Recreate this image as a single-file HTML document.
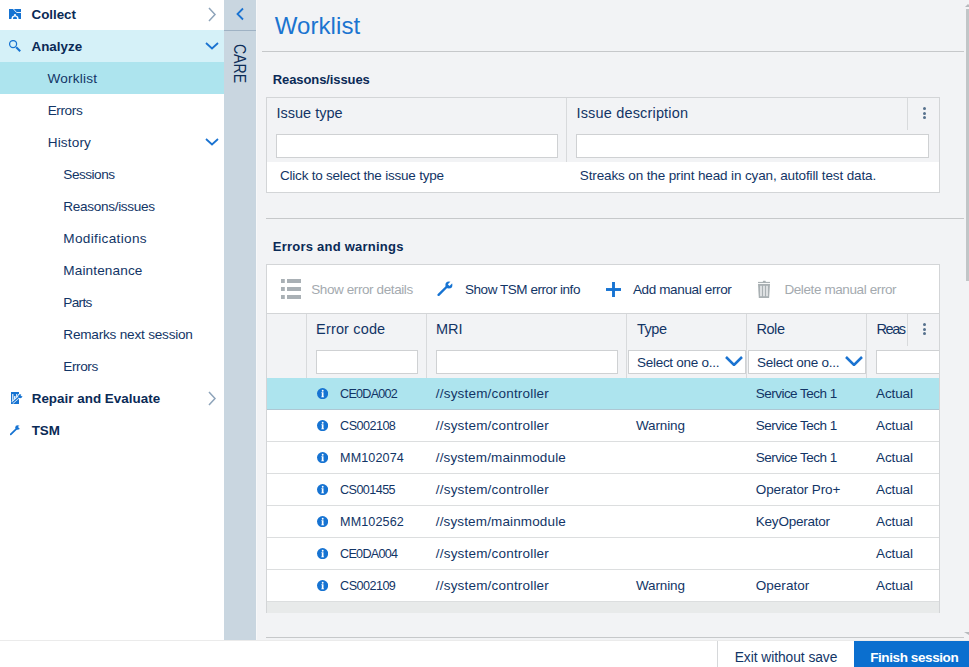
<!DOCTYPE html><html><head><meta charset="utf-8"><style>
html,body{margin:0;padding:0;width:969px;height:667px;overflow:hidden;background:#fff}
body{position:relative;font-family:"Liberation Sans",sans-serif}
.t{position:absolute;white-space:nowrap;line-height:normal}
.b{position:absolute;display:block}
</style></head><body>
<div class="b" style="left:0px;top:0px;width:969px;height:667px;background:#ffffff"></div>
<div class="b" style="left:256px;top:0px;width:713px;height:640px;background:#f2f3f5"></div>
<div class="b" style="left:256px;top:0px;width:1px;height:640px;background:#f7f8f9"></div>
<div class="b" style="left:0px;top:30px;width:224px;height:32px;background:#d5f1f8"></div>
<div class="b" style="left:0px;top:62px;width:224px;height:32px;background:#ade4ee"></div>
<div class="b" style="left:224px;top:0px;width:32px;height:640px;background:#c9d6e0"></div>
<div class="b" style="left:224px;top:30px;width:32px;height:1px;background:#9fb2c4"></div>
<div class="t" style="left:31.50px;top:7.00px;font-size:13.4px;font-weight:bold;color:#0a2a56;letter-spacing:-0.029px;">Collect</div>
<div class="t" style="left:31.50px;top:38.50px;font-size:13.4px;font-weight:bold;color:#0a2a56;letter-spacing:0.010px;">Analyze</div>
<div class="t" style="left:47.50px;top:70.80px;font-size:13.6px;color:#123566;letter-spacing:0.200px;">Worklist</div>
<div class="t" style="left:47.70px;top:102.80px;font-size:13.6px;color:#123566;letter-spacing:-0.404px;">Errors</div>
<div class="t" style="left:47.70px;top:134.80px;font-size:13.6px;color:#123566;letter-spacing:0.148px;">History</div>
<div class="t" style="left:63.30px;top:166.80px;font-size:13.6px;color:#123566;letter-spacing:-0.484px;">Sessions</div>
<div class="t" style="left:63.30px;top:198.80px;font-size:13.6px;color:#123566;letter-spacing:-0.323px;">Reasons/issues</div>
<div class="t" style="left:63.30px;top:230.80px;font-size:13.6px;color:#123566;letter-spacing:0.336px;">Modifications</div>
<div class="t" style="left:63.30px;top:262.80px;font-size:13.6px;color:#123566;letter-spacing:0.123px;">Maintenance</div>
<div class="t" style="left:63.30px;top:294.80px;font-size:13.6px;color:#123566;letter-spacing:-0.686px;">Parts</div>
<div class="t" style="left:63.30px;top:326.80px;font-size:13.6px;color:#123566;letter-spacing:-0.215px;">Remarks next session</div>
<div class="t" style="left:63.30px;top:358.80px;font-size:13.6px;color:#123566;letter-spacing:-0.404px;">Errors</div>
<div class="t" style="left:31.70px;top:390.90px;font-size:13.4px;font-weight:bold;color:#0a2a56;letter-spacing:0.023px;">Repair and Evaluate</div>
<div class="t" style="left:31.70px;top:422.60px;font-size:13.4px;font-weight:bold;color:#0a2a56;letter-spacing:0.000px;">TSM</div>
<svg class="b" style="left:207px;top:6.5px" width="10" height="15" viewBox="0 0 10 15"><path d="M2 0.9 L8 7.5 L2 14.1" fill="none" stroke="#8ea4ba" stroke-width="1.5"/></svg>
<svg class="b" style="left:205px;top:41.5px" width="14" height="8" viewBox="0 0 14 8"><path d="M1 1 L7.0 6.5 L13 1" fill="none" stroke="#1a73d1" stroke-width="1.8"/></svg>
<svg class="b" style="left:205px;top:137.5px" width="14" height="8" viewBox="0 0 14 8"><path d="M1 1 L7.0 6.5 L13 1" fill="none" stroke="#1a73d1" stroke-width="1.8"/></svg>
<svg class="b" style="left:207px;top:391px" width="10" height="15" viewBox="0 0 10 15"><path d="M2 0.9 L8 7.5 L2 14.1" fill="none" stroke="#8ea4ba" stroke-width="1.5"/></svg>
<svg class="b" style="left:235px;top:7px" width="10" height="14" viewBox="0 0 10 14"><path d="M8 1.5 L2.5 7 L8 12.5" fill="none" stroke="#1a73d1" stroke-width="1.8"/></svg>
<div class="t" style="left:219px;top:51.5px;width:40px;height:17px;font-size:17px;line-height:17px;color:#0c2d57;text-align:center;transform:rotate(90deg) scaleX(0.83);transform-origin:center;letter-spacing:0px">CARE</div>
<svg class="b" style="left:9px;top:9px" width="12" height="10" viewBox="0 0 12 10">
<rect x="0" y="0" width="12" height="10" fill="#1673d2"/>
<path d="M4 -0.5 L7.6 3.5 H12.5" stroke="#fff" stroke-width="0.9" fill="none"/>
<path d="M2.4 10.2 A3.6 3.6 0 0 1 9.6 10.2 Z" fill="#fff"/>
<path d="M3.9 10 A2.1 2.4 0 0 1 8.1 10 Z" fill="#1673d2"/>
<circle cx="6" cy="6.1" r="1.1" fill="#fff"/>
</svg>
<svg class="b" style="left:9px;top:40px" width="12" height="12" viewBox="0 0 12 12">
<circle cx="4.1" cy="4.0" r="3.5" fill="none" stroke="#1673d2" stroke-width="1.25"/>
<path d="M7.2 7.2 L11.2 11.2" stroke="#1673d2" stroke-width="2"/>
</svg>
<svg class="b" style="left:11px;top:392px" width="12" height="12" viewBox="0 0 12 12">
<rect x="0" y="0" width="8" height="12" fill="#1673d2"/>
<path d="M1.8 2 V8.4 H4.8" stroke="#fff" stroke-width="1.1" fill="none"/>
<rect x="3.1" y="4.1" width="1.4" height="2.8" rx="0.5" fill="#fff"/>
<path d="M5.6 2 V5.6" stroke="#fff" stroke-width="0.9"/>
<path d="M1.3 10.8 L7.6 5.2" stroke="#fff" stroke-width="2.6"/>
<circle cx="9.2" cy="4.2" r="2.8" fill="#fff"/>
<path d="M1.3 10.8 L7.6 5.2" stroke="#1673d2" stroke-width="1.3"/>
<circle cx="9.2" cy="4.2" r="2.0" fill="#1673d2"/>
<path d="M9.6 3.4 L10.9 1.6 L12.6 3.2 L11.1 4.6 Z" fill="#fff"/>
</svg>
<svg class="b" style="left:10px;top:425px" width="11" height="11" viewBox="0 0 11 11">
<path d="M0.7 9.3 L6.4 3.8" stroke="#1673d2" stroke-width="1.8" stroke-linecap="round"/>
<circle cx="7.6" cy="2.5" r="2.35" fill="#1673d2"/>
<path d="M8.0 2.0 L9.2 0.6 L11 2.2 L9.6 3.4 Z" fill="#fff"/>
</svg>
<div class="t" style="left:274.70px;top:12.20px;font-size:24px;color:#1b74d0;letter-spacing:0.087px;">Worklist</div>
<div class="b" style="left:262px;top:51px;width:702px;height:1px;background:#c6c8ca"></div>
<div class="t" style="left:272.80px;top:71.50px;font-size:13px;font-weight:bold;color:#0a2a56;letter-spacing:-0.098px;">Reasons/issues</div>
<div class="b" style="left:266px;top:97px;width:674px;height:96px;background:#ffffff;border:1px solid #d3d5d7;box-sizing:border-box"></div>
<div class="b" style="left:267px;top:98px;width:672px;height:64px;background:#f2f3f5"></div>
<div class="b" style="left:566px;top:98px;width:1px;height:64px;background:#d8dadc"></div>
<div class="b" style="left:907px;top:98px;width:1px;height:32px;background:#d8dadc"></div>
<div class="t" style="left:276.50px;top:104.90px;font-size:14.5px;color:#123566;letter-spacing:-0.010px;">Issue type</div>
<div class="t" style="left:576.50px;top:104.90px;font-size:14.5px;color:#123566;letter-spacing:0.168px;">Issue description</div>
<div class="b" style="left:276px;top:134px;width:282px;height:24px;background:#fff;border:1px solid #cfd1d3;box-sizing:border-box"></div>
<div class="b" style="left:576px;top:134px;width:353px;height:24px;background:#fff;border:1px solid #cfd1d3;box-sizing:border-box"></div>
<div class="t" style="left:280.00px;top:168.20px;font-size:13.5px;color:#123566;letter-spacing:-0.218px;">Click to select the issue type</div>
<div class="t" style="left:579.80px;top:168.20px;font-size:13.5px;color:#123566;letter-spacing:-0.128px;">Streaks on the print head in cyan, autofill test data.</div>
<div class="b" style="left:923.4px;top:107.0px;width:3px;height:3px;background:#56718d;border-radius:50%"></div>
<div class="b" style="left:923.4px;top:111.5px;width:3px;height:3px;background:#56718d;border-radius:50%"></div>
<div class="b" style="left:923.4px;top:116.0px;width:3px;height:3px;background:#56718d;border-radius:50%"></div>
<div class="b" style="left:266px;top:218px;width:698px;height:1px;background:#c6c8ca"></div>
<div class="t" style="left:272.80px;top:239.00px;font-size:13px;font-weight:bold;color:#0a2a56;letter-spacing:0.232px;">Errors and warnings</div>
<div class="b" style="left:266px;top:264px;width:674px;height:349px;background:#fff;border:1px solid #d3d5d7;border-bottom:none;box-sizing:border-box"></div>
<div class="b" style="left:267px;top:313px;width:672px;height:1px;background:#d3d5d7"></div>
<div class="b" style="left:267px;top:314px;width:672px;height:64px;background:#f2f3f5"></div>
<svg class="b" style="left:281px;top:279px" width="20" height="20" viewBox="0 0 20 20" fill="#a9b0b5">
<rect x="0" y="0" width="3.8" height="4"/><rect x="6" y="0" width="14" height="4"/>
<rect x="0" y="8" width="3.8" height="4"/><rect x="6" y="8" width="14" height="4"/>
<rect x="0" y="16" width="3.8" height="4"/><rect x="6" y="16" width="14" height="4"/>
</svg>
<div class="t" style="left:311.20px;top:282.00px;font-size:13.5px;color:#a4aaaf;letter-spacing:-0.400px;">Show error details</div>
<svg class="b" style="left:437px;top:281px" width="16" height="16" viewBox="0 0 16 16">
<path d="M1.6 13.8 L9.5 6" stroke="#1673d2" stroke-width="2.4" stroke-linecap="round"/>
<circle cx="11.9" cy="4.0" r="3.5" fill="#1673d2"/>
<path d="M15.8 1.7 L14.1 0 L10.8 3.3 L12.5 5 Z" fill="#fff"/>
</svg>
<div class="t" style="left:465.00px;top:281.60px;font-size:13.5px;color:#123566;letter-spacing:-0.452px;">Show TSM error info</div>
<svg class="b" style="left:605.5px;top:281.5px" width="15" height="15" viewBox="0 0 15 15">
<rect x="6.05" y="0" width="2.9" height="15" fill="#1673d2"/><rect x="0" y="6.05" width="15" height="2.9" fill="#1673d2"/>
</svg>
<div class="t" style="left:632.90px;top:281.60px;font-size:13.5px;color:#123566;letter-spacing:-0.360px;">Add manual error</div>
<svg class="b" style="left:757px;top:280px" width="14" height="18" viewBox="0 0 14 18" fill="#a9b0b3">
<path d="M6.2 0.7 H8.4 L8.9 2 H5.7 Z"/>
<rect x="1" y="1.9" width="12" height="1.2"/>
<path d="M1 4 H13 L12.1 18 H1.8 Z"/>
<rect x="3" y="5.8" width="2" height="10.4" fill="#dde0e2"/><rect x="6" y="5.8" width="2" height="10.4" fill="#dde0e2"/><rect x="9" y="5.8" width="2" height="10.4" fill="#dde0e2"/>
</svg>
<div class="t" style="left:784.40px;top:281.60px;font-size:13.5px;color:#a4aaaf;letter-spacing:-0.394px;">Delete manual error</div>
<div class="b" style="left:306px;top:314px;width:1px;height:64px;background:#d8dadc"></div>
<div class="b" style="left:426px;top:314px;width:1px;height:64px;background:#d8dadc"></div>
<div class="b" style="left:626px;top:314px;width:1px;height:64px;background:#d8dadc"></div>
<div class="b" style="left:746px;top:314px;width:1px;height:64px;background:#d8dadc"></div>
<div class="b" style="left:866px;top:314px;width:1px;height:64px;background:#d8dadc"></div>
<div class="b" style="left:907px;top:314px;width:1px;height:32px;background:#d8dadc"></div>
<div class="t" style="left:316.10px;top:321.00px;font-size:14.5px;color:#123566;letter-spacing:0.155px;">Error code</div>
<div class="t" style="left:436.10px;top:321.00px;font-size:14.5px;color:#123566;letter-spacing:-0.089px;">MRI</div>
<div class="t" style="left:637.00px;top:321.00px;font-size:14.5px;color:#123566;letter-spacing:-0.479px;">Type</div>
<div class="t" style="left:756.40px;top:321.00px;font-size:14.5px;color:#123566;letter-spacing:-0.409px;">Role</div>
<div class="b" style="left:876px;top:318px;width:31px;height:22px;overflow:hidden">
<div class="t" style="left:0.60px;top:3.00px;font-size:14.5px;color:#123566;letter-spacing:-1.448px;">Reas</div>
</div>
<div class="b" style="left:923.4px;top:323.0px;width:3px;height:3px;background:#56718d;border-radius:50%"></div>
<div class="b" style="left:923.4px;top:327.5px;width:3px;height:3px;background:#56718d;border-radius:50%"></div>
<div class="b" style="left:923.4px;top:332.0px;width:3px;height:3px;background:#56718d;border-radius:50%"></div>
<div class="b" style="left:316px;top:350px;width:102px;height:24px;background:#fff;border:1px solid #cfd1d3;box-sizing:border-box"></div>
<div class="b" style="left:436px;top:350px;width:182px;height:24px;background:#fff;border:1px solid #cfd1d3;box-sizing:border-box"></div>
<div class="b" style="left:628px;top:350px;width:118px;height:24px;background:#fff;border:1px solid #cfd1d3;box-sizing:border-box"></div>
<div class="b" style="left:748px;top:350px;width:118px;height:24px;background:#fff;border:1px solid #cfd1d3;box-sizing:border-box"></div>
<div class="b" style="left:876px;top:350px;width:63px;height:24px;background:#fff;border:1px solid #cfd1d3;border-right:none;box-sizing:border-box"></div>
<div class="t" style="left:637.00px;top:355.00px;font-size:13.5px;color:#123566;letter-spacing:-0.279px;">Select one o...</div>
<div class="t" style="left:757.00px;top:355.00px;font-size:13.5px;color:#123566;letter-spacing:-0.279px;">Select one o...</div>
<svg class="b" style="left:724.5px;top:355.8px" width="18" height="10.5" viewBox="0 0 18 10.5"><path d="M1 1 L9.0 9.0 L17 1" fill="none" stroke="#1a73d1" stroke-width="2.5"/></svg>
<svg class="b" style="left:844.5px;top:355.8px" width="18" height="10.5" viewBox="0 0 18 10.5"><path d="M1 1 L9.0 9.0 L17 1" fill="none" stroke="#1a73d1" stroke-width="2.5"/></svg>
<div class="b" style="left:267px;top:378px;width:672px;height:31px;background:#ade4ee"></div>
<div class="b" style="left:267px;top:409px;width:672px;height:1px;background:#aec7d3"></div>
<svg class="b" style="left:316.8px;top:387.7px" width="11.2" height="11.2" viewBox="0 0 11.2 11.2"><circle cx="5.6" cy="5.6" r="5.6" fill="#1673d2"/><path d="M4.4 4.2 H6.5 V8.4 H7 V9.2 H4.3 V8.4 H4.8 V5 H4.4 Z" fill="#fff"/><circle cx="5.7" cy="2.7" r="0.95" fill="#fff"/></svg>
<div class="t" style="left:340.10px;top:386.80px;font-size:12.6px;color:#123566;letter-spacing:-0.748px;">CE0DA002</div>
<div class="t" style="left:435.80px;top:385.80px;font-size:13.5px;color:#123566;letter-spacing:0.193px;">//system/controller</div>
<div class="t" style="left:755.80px;top:385.80px;font-size:13.5px;color:#123566;letter-spacing:-0.531px;">Service Tech 1</div>
<div class="t" style="left:876.00px;top:385.80px;font-size:13.5px;color:#123566;letter-spacing:-0.123px;">Actual</div>
<div class="b" style="left:267px;top:441px;width:672px;height:1px;background:#dcdedf"></div>
<svg class="b" style="left:316.8px;top:419.7px" width="11.2" height="11.2" viewBox="0 0 11.2 11.2"><circle cx="5.6" cy="5.6" r="5.6" fill="#1673d2"/><path d="M4.4 4.2 H6.5 V8.4 H7 V9.2 H4.3 V8.4 H4.8 V5 H4.4 Z" fill="#fff"/><circle cx="5.7" cy="2.7" r="0.95" fill="#fff"/></svg>
<div class="t" style="left:340.10px;top:418.80px;font-size:12.6px;color:#123566;letter-spacing:-0.535px;">CS002108</div>
<div class="t" style="left:435.80px;top:417.80px;font-size:13.5px;color:#123566;letter-spacing:0.193px;">//system/controller</div>
<div class="t" style="left:636.00px;top:417.80px;font-size:13.5px;color:#123566;letter-spacing:-0.129px;">Warning</div>
<div class="t" style="left:755.80px;top:417.80px;font-size:13.5px;color:#123566;letter-spacing:-0.531px;">Service Tech 1</div>
<div class="t" style="left:876.00px;top:417.80px;font-size:13.5px;color:#123566;letter-spacing:-0.123px;">Actual</div>
<div class="b" style="left:267px;top:473px;width:672px;height:1px;background:#dcdedf"></div>
<svg class="b" style="left:316.8px;top:451.7px" width="11.2" height="11.2" viewBox="0 0 11.2 11.2"><circle cx="5.6" cy="5.6" r="5.6" fill="#1673d2"/><path d="M4.4 4.2 H6.5 V8.4 H7 V9.2 H4.3 V8.4 H4.8 V5 H4.4 Z" fill="#fff"/><circle cx="5.7" cy="2.7" r="0.95" fill="#fff"/></svg>
<div class="t" style="left:340.10px;top:450.80px;font-size:12.6px;color:#123566;letter-spacing:0.095px;">MM102074</div>
<div class="t" style="left:435.80px;top:449.80px;font-size:13.5px;color:#123566;letter-spacing:0.136px;">//system/mainmodule</div>
<div class="t" style="left:755.80px;top:449.80px;font-size:13.5px;color:#123566;letter-spacing:-0.531px;">Service Tech 1</div>
<div class="t" style="left:876.00px;top:449.80px;font-size:13.5px;color:#123566;letter-spacing:-0.123px;">Actual</div>
<div class="b" style="left:267px;top:505px;width:672px;height:1px;background:#dcdedf"></div>
<svg class="b" style="left:316.8px;top:483.7px" width="11.2" height="11.2" viewBox="0 0 11.2 11.2"><circle cx="5.6" cy="5.6" r="5.6" fill="#1673d2"/><path d="M4.4 4.2 H6.5 V8.4 H7 V9.2 H4.3 V8.4 H4.8 V5 H4.4 Z" fill="#fff"/><circle cx="5.7" cy="2.7" r="0.95" fill="#fff"/></svg>
<div class="t" style="left:340.10px;top:482.80px;font-size:12.6px;color:#123566;letter-spacing:-0.578px;">CS001455</div>
<div class="t" style="left:435.80px;top:481.80px;font-size:13.5px;color:#123566;letter-spacing:0.193px;">//system/controller</div>
<div class="t" style="left:755.80px;top:481.80px;font-size:13.5px;color:#123566;letter-spacing:-0.110px;">Operator Pro+</div>
<div class="t" style="left:876.00px;top:481.80px;font-size:13.5px;color:#123566;letter-spacing:-0.123px;">Actual</div>
<div class="b" style="left:267px;top:537px;width:672px;height:1px;background:#dcdedf"></div>
<svg class="b" style="left:316.8px;top:515.7px" width="11.2" height="11.2" viewBox="0 0 11.2 11.2"><circle cx="5.6" cy="5.6" r="5.6" fill="#1673d2"/><path d="M4.4 4.2 H6.5 V8.4 H7 V9.2 H4.3 V8.4 H4.8 V5 H4.4 Z" fill="#fff"/><circle cx="5.7" cy="2.7" r="0.95" fill="#fff"/></svg>
<div class="t" style="left:340.10px;top:514.80px;font-size:12.6px;color:#123566;letter-spacing:0.095px;">MM102562</div>
<div class="t" style="left:435.80px;top:513.80px;font-size:13.5px;color:#123566;letter-spacing:0.136px;">//system/mainmodule</div>
<div class="t" style="left:755.80px;top:513.80px;font-size:13.5px;color:#123566;letter-spacing:-0.223px;">KeyOperator</div>
<div class="t" style="left:876.00px;top:513.80px;font-size:13.5px;color:#123566;letter-spacing:-0.123px;">Actual</div>
<div class="b" style="left:267px;top:569px;width:672px;height:1px;background:#dcdedf"></div>
<svg class="b" style="left:316.8px;top:547.7px" width="11.2" height="11.2" viewBox="0 0 11.2 11.2"><circle cx="5.6" cy="5.6" r="5.6" fill="#1673d2"/><path d="M4.4 4.2 H6.5 V8.4 H7 V9.2 H4.3 V8.4 H4.8 V5 H4.4 Z" fill="#fff"/><circle cx="5.7" cy="2.7" r="0.95" fill="#fff"/></svg>
<div class="t" style="left:340.10px;top:546.80px;font-size:12.6px;color:#123566;letter-spacing:-0.734px;">CE0DA004</div>
<div class="t" style="left:435.80px;top:545.80px;font-size:13.5px;color:#123566;letter-spacing:0.193px;">//system/controller</div>
<div class="t" style="left:876.00px;top:545.80px;font-size:13.5px;color:#123566;letter-spacing:-0.123px;">Actual</div>
<div class="b" style="left:267px;top:601px;width:672px;height:1px;background:#dcdedf"></div>
<svg class="b" style="left:316.8px;top:579.7px" width="11.2" height="11.2" viewBox="0 0 11.2 11.2"><circle cx="5.6" cy="5.6" r="5.6" fill="#1673d2"/><path d="M4.4 4.2 H6.5 V8.4 H7 V9.2 H4.3 V8.4 H4.8 V5 H4.4 Z" fill="#fff"/><circle cx="5.7" cy="2.7" r="0.95" fill="#fff"/></svg>
<div class="t" style="left:340.10px;top:578.80px;font-size:12.6px;color:#123566;letter-spacing:-0.535px;">CS002109</div>
<div class="t" style="left:435.80px;top:577.80px;font-size:13.5px;color:#123566;letter-spacing:0.193px;">//system/controller</div>
<div class="t" style="left:636.00px;top:577.80px;font-size:13.5px;color:#123566;letter-spacing:-0.129px;">Warning</div>
<div class="t" style="left:755.80px;top:577.80px;font-size:13.5px;color:#123566;letter-spacing:0.018px;">Operator</div>
<div class="t" style="left:876.00px;top:577.80px;font-size:13.5px;color:#123566;letter-spacing:-0.123px;">Actual</div>
<div class="b" style="left:267px;top:602px;width:672px;height:11px;background:#e8eaea"></div>
<div class="b" style="left:266px;top:637px;width:698px;height:1px;background:#c6c8ca"></div>
<div class="b" style="left:966px;top:9px;width:3px;height:272px;background:#c1c5c7"></div>
<svg class="b" style="left:963px;top:3px" width="6" height="4" viewBox="0 0 6 4"><path d="M2 4 L5 1 L6 2 V4 Z" fill="#b5babd"/></svg>
<svg class="b" style="left:963px;top:632px" width="6" height="4" viewBox="0 0 6 4"><path d="M1 0 L6 0 V3 Z" fill="#b5babd"/></svg>
<div class="b" style="left:0px;top:640px;width:969px;height:27px;background:#ffffff"></div>
<div class="b" style="left:0px;top:640px;width:969px;height:1px;background:#ebebeb"></div>
<div class="b" style="left:717px;top:641px;width:1px;height:26px;background:#d6d8da"></div>
<div class="t" style="left:734.70px;top:649.60px;font-size:13.8px;color:#123566;letter-spacing:-0.053px;">Exit without save</div>
<div class="b" style="left:854px;top:641px;width:115px;height:26px;background:#0b6fcf"></div>
<div class="t" style="left:870.20px;top:649.60px;font-size:13.5px;font-weight:bold;color:#ffffff;letter-spacing:-0.405px;">Finish session</div>
</body></html>
